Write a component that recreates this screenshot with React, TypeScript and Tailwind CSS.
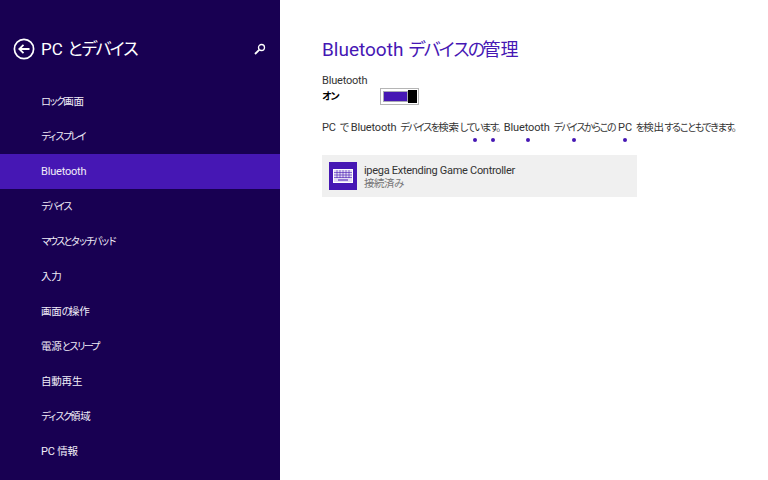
import type { ReactNode } from "react";

const font = "[font-family:Roboto,'Noto_Sans_CJK_JP',sans-serif]";

const menuItems = [
  "ロック画面",
  "ディスプレイ",
  "Bluetooth",
  "デバイス",
  "マウスとタッチパッド",
  "入力",
  "画面の操作",
  "電源とスリープ",
  "自動再生",
  "ディスク領域",
  "PC 情報",
];

// the reference font has narrow kana, so runs of kana get tighter spacing than kanji and latin
function Ja({ text, kana, kanji }: { text: string; kana: string; kanji: string }) {
  const parts: ReactNode[] = text.split(/([\u3040-\u30ff。]+|[\u4e00-\u9fff]+)/).map((part, i) => {
    if (/^[\u3040-\u30ff。]/.test(part)) return <span key={i} className={kana}>{part}</span>;
    if (/^[\u4e00-\u9fff]/.test(part)) return <span key={i} className={kanji}>{part}</span>;
    return part;
  });
  return <>{parts}</>;
}

function BackIcon() {
  return (
    <svg width="22" height="22" viewBox="0 0 22 22" fill="none" stroke="#fff" className="shrink-0">
      <circle cx="11" cy="11" r="9.6" strokeWidth="1.7" />
      <path d="M16.5 11H6.5M10.5 6.8 6.3 11l4.2 4.2" strokeWidth="1.8" />
    </svg>
  );
}

function SearchIcon() {
  return (
    <svg width="12" height="12" viewBox="0 0 12 12" fill="none" stroke="#fff">
      <circle cx="7.5" cy="4.5" r="3" strokeWidth="1.3" />
      <path d="M5.2 6.8 1 11" strokeWidth="1.8" />
    </svg>
  );
}

function KeyboardIcon() {
  return (
    <svg width="20" height="14" viewBox="0 0 20 14" fill="none">
      <rect x="0.5" y="0.5" width="19" height="13" fill="#fff" fillOpacity="0.85" stroke="#fff" />
      <path d="M1 3.5H19M1 6H19M1 8.5H19M4 1V9M7 1V9M10 1V9M13 1V9M16 1V9" stroke="#4617b4" strokeWidth="0.6" />
      <path d="M5 11H15" stroke="#4617b4" strokeWidth="1" />
    </svg>
  );
}

export default function App() {
  return (
    <div className={`flex h-[480px] w-[768px] overflow-hidden bg-white ${font}`}>
      {/* Sidebar */}
      <div className="flex w-[280px] shrink-0 flex-col bg-[#180052] text-white">
        <div className="flex h-[84px] items-center pl-[13px] pr-[14px] pt-[14px]">
          <BackIcon />
          <span className="ml-[6px] whitespace-nowrap text-[17px] leading-none">
            <Ja text="PC とデバイス" kana="tracking-[-3px]" kanji="" />
          </span>
          <span className="ml-auto flex">
            <SearchIcon />
          </span>
        </div>
        {menuItems.map((item) => (
          <div
            key={item}
            className={`flex h-[35px] items-center whitespace-pre pl-[41px] pt-[1px] text-[11px] tracking-[-0.2px] text-[#f0edf8] ${item === "Bluetooth" ? "bg-[#4617b4]" : ""}`}
          >
            <span>
              <Ja text={item} kana="text-[10px] tracking-[-2.6px]" kanji="text-[10.5px]" />
            </span>
          </div>
        ))}
      </div>

      {/* Main */}
      <div className="flex flex-1 flex-col pl-[42px] pt-[38px]">
        <h1 className="whitespace-nowrap text-[19px] font-normal leading-[24px] text-[#4617b4]">
          <Ja text="Bluetooth デバイスの管理" kana="text-[18px] tracking-[-3px]" kanji="text-[18px]" />
        </h1>
        <div className="mt-[12px] text-[11px] leading-[14px] tracking-[-0.2px] text-[#333]">Bluetooth</div>
        <div className="flex items-center">
          <span className="w-[58px] text-[10px] font-bold leading-[16px] tracking-[-2px] text-black">オン</span>
          <div className="flex h-[17px] w-[39px] items-stretch border border-[#b5b5b5] py-[1px] pl-[2px] pr-[1px]">
            <div className="my-[1px] flex-1 border border-[#a9a9b5] bg-[#4617b4]" />
            <div className="w-[9px] bg-black" />
          </div>
        </div>
        <p className="mt-[15px] whitespace-nowrap text-[11px] leading-[16px] tracking-[-0.15px] [word-spacing:1px] text-[#333]">
          <Ja
            text="PC で Bluetooth デバイスを検索しています。Bluetooth デバイスからこの PC を検出することもできます。"
            kana="text-[10px] tracking-[-2.3px]"
            kanji="text-[10.5px]"
          />
        </p>
        <div className="mt-[2px] flex h-[4px] pl-[151px]">
          <span className="h-[4px] w-[4px] rounded-full bg-[#4617b4]" />
          <span className="ml-[14px] h-[4px] w-[4px] rounded-full bg-[#4617b4]" />
          <span className="ml-[31px] h-[4px] w-[4px] rounded-full bg-[#4617b4]" />
          <span className="ml-[42px] h-[4px] w-[4px] rounded-full bg-[#4617b4]" />
          <span className="ml-[47px] h-[4px] w-[4px] rounded-full bg-[#4617b4]" />
        </div>
        <div className="mt-[13px] flex h-[42px] w-[315px] items-center bg-[#f0f0f0] pl-[7px]">
          <div className="flex h-[28px] w-[28px] items-center justify-center bg-[#4617b4]">
            <KeyboardIcon />
          </div>
          <div className="ml-[7px]">
            <div className="whitespace-nowrap text-[11px] leading-[15px] tracking-[-0.3px] text-[#333]">ipega Extending Game Controller</div>
            <div className="text-[10.5px] leading-[12px] tracking-[-0.5px] text-[#777]">接続済み</div>
          </div>
        </div>
      </div>
    </div>
  );
}
